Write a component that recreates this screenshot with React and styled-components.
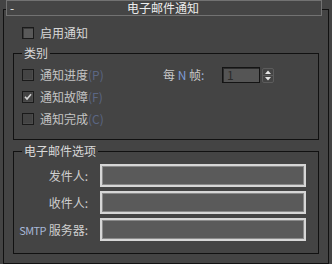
import styled, { createGlobalStyle } from 'styled-components';

const GlobalStyle = createGlobalStyle`
  html, body {
    margin: 0;
    padding: 0;
    background: #444444;
  }
  body {
    font-family: "Noto Sans CJK SC", "Liberation Sans", sans-serif;
    font-size: 12px;
    line-height: 16px;
    color: #d8d8d8;
  }
`;

const Page = styled.div`
  width: 332px;
  height: 264px;
  box-sizing: border-box;
  padding-top: 9px;
  overflow: hidden;
`;

const Frame = styled.div`
  margin: 0 3px;
  border: 1px solid #111;
  padding: 0 9px 9px;
`;

const Header = styled.div`
  box-sizing: border-box;
  height: 16px;
  margin: -10px -3px 0 -7px;
  border: 1px solid #727272;
  background: #454545;
  display: flex;
  align-items: center;
  position: relative;
  color: #ececec;
  line-height: 14px;
`;

const Minus = styled.span`
  position: absolute;
  left: 3px;
  top: 0;
  color: #ececec;
`;

const Title = styled.span`
  flex: 1;
  text-align: center;
  padding-right: 2px;
`;

const Row = styled.label`
  display: flex;
  align-items: center;
  height: ${p => p.$h || 22}px;
  gap: 6px;
  white-space: nowrap;
  color: ${p => (p.$dim ? '#c4c4c4' : '#d8d8d8')};
`;

const TopRow = styled(Row)`
  margin: 9px 0 0 9px;
  height: 16px;
`;

const Box = styled.span`
  box-sizing: border-box;
  width: 12px;
  height: 12px;
  border: 1px solid #1a1a1a;
  background: ${p => (p.$on ? '#595959' : '#444')};
  box-shadow: ${p => (p.$on ? 'inset 1px 1px 0 #3a3a3a' : 'inset -1px -1px 0 #4c4c4c')};
  display: flex;
  align-items: center;
  justify-content: center;
`;

const Key = styled.span`
  color: #5b6784;
`;

const Group = styled.fieldset`
  margin: ${p => p.$mt}px 0 0;
  padding: ${p => p.$pt}px ${p => p.$pr}px ${p => p.$pb}px ${p => p.$pl}px;
  border: 1px solid #111;
  min-width: 0;
`;

const Legend = styled.legend`
  padding: 0 2px;
  margin-left: ${p => p.$ml || 0}px;
  color: #d8d8d8;
  line-height: 16px;
`;

const Grid = styled.div`
  display: grid;
  grid-template-columns: 141px 1fr;
`;

const Side = styled.div`
  display: flex;
  align-items: center;
  height: 22px;
`;

const SideLabel = styled.span`
  width: 59px;
  white-space: nowrap;
  color: #c8c8c8;
`;

const Latin = styled.span`
  color: ${p => p.$c || '#7d9cd6'};
  font-size: ${p => p.$fs || 12}px;
  letter-spacing: ${p => p.$ls || 0}px;
`;

const NumBox = styled.div`
  box-sizing: border-box;
  width: 38px;
  height: 16px;
  border: 1px solid #141414;
  box-shadow: inset 1px 1px 0 #2c2c2c;
  background: #555;
  color: #2a2a2a;
  padding-left: 4px;
  line-height: 14px;
`;

const Spin = styled.div`
  box-sizing: border-box;
  width: 12px;
  height: 15px;
  margin-left: 2px;
  border: 1px solid #5c5c5c;
  border-radius: 2px;
  display: flex;
  flex-direction: column;
`;

const SpinHalf = styled.div`
  flex: 1;
  display: flex;
  align-items: center;
  justify-content: center;
  border-top: ${p => (p.$sep ? '1px solid #5c5c5c' : 'none')};
`;

const Form = styled.div`
  display: grid;
  grid-template-columns: 70px 206px;
  column-gap: 12px;
  row-gap: 4px;
  align-items: center;
`;

const FieldLabel = styled.span`
  text-align: right;
  white-space: nowrap;
  color: #cfcfcf;
`;

const Field = styled.div`
  box-sizing: border-box;
  height: 23px;
  border: 2px solid #d6d6d6;
  box-shadow: inset 0 0 0 1px #8a8a8a;
  background: #5a5a5a;
`;

function Check({ on, checked }) {
  return (
    <Box $on={on}>
      {checked && (
        <svg width="8" height="8" viewBox="0 0 8 8">
          <path d="M1 3.8 L3 6 L7 1.2" fill="none" stroke="#d4d4d4" strokeWidth="1.6" />
        </svg>
      )}
    </Box>
  );
}

function Arrow({ up }) {
  return (
    <svg width="6" height="4" viewBox="0 0 6 4">
      <path d={up ? 'M0 4 L3 0.5 L6 4 Z' : 'M0 0 L3 3.5 L6 0 Z'} fill="#e6e6e6" />
    </svg>
  );
}

export default function App() {
  return (
    <Page>
      <GlobalStyle />
      <Frame>
        <Header>
          <Minus>-</Minus>
          <Title>电子邮件通知</Title>
        </Header>

        <TopRow>
          <Check on />
          启用通知
        </TopRow>

        <Group $mt={4} $pt={3} $pr={8} $pb={9} $pl={8}>
          <Legend>类别</Legend>
          <Grid>
            <Row $dim>
              <Check />
              <span>通知进度<Key>(P)</Key></span>
            </Row>
            <Side>
              <SideLabel>每 <Latin>N</Latin> 帧<Latin $c="#9fb0d4">:</Latin></SideLabel>
              <NumBox>1</NumBox>
              <Spin>
                <SpinHalf><Arrow up /></SpinHalf>
                <SpinHalf $sep><Arrow /></SpinHalf>
              </Spin>
            </Side>
            <Row $dim>
              <Check checked />
              <span>通知故障<Key>(F)</Key></span>
            </Row>
            <div />
            <Row $dim>
              <Check />
              <span>通知完成<Key>(C)</Key></span>
            </Row>
          </Grid>
        </Group>

        <Group $mt={3} $pt={5} $pr={8} $pb={12} $pl={4}>
          <Legend $ml={4}>电子邮件选项</Legend>
          <Form>
            <FieldLabel>发件人:</FieldLabel>
            <Field />
            <FieldLabel>收件人:</FieldLabel>
            <Field />
            <FieldLabel>
              <Latin $c="#a8b8d8" $fs={11} $ls={-0.6}>SMTP</Latin> 服务器:
            </FieldLabel>
            <Field />
          </Form>
        </Group>
      </Frame>
    </Page>
  );
}
